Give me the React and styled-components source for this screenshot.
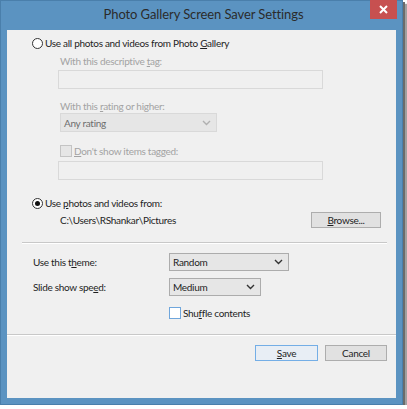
import React from 'react';
import styled, { createGlobalStyle } from 'styled-components';

const GlobalStyle = createGlobalStyle`
  html, body {
    margin: 0;
    padding: 0;
    background: #ffffff;
  }
  body {
    font-family: "Segoe UI", Lato, "Noto Sans", sans-serif;
    font-size: 10px;
    letter-spacing: -0.3px;
    color: #1e1e1e;
  }
`;

// Window frame with the Windows 8 blue chrome
const Window = styled.div`
  width: 403px;
  height: 405px;
  box-sizing: border-box;
  background: #5b93c1;
  border: 1px solid #4a7fab;
  box-shadow: 2px 2px 0 #6b6b6b, 4px 4px 1px #a0a0a0;
  display: flex;
  flex-direction: column;
`;

const TitleBar = styled.div`
  height: 29px;
  display: flex;
  align-items: flex-start;
  position: relative;
`;

const Title = styled.div`
  flex: 1;
  text-align: center;
  font-size: 13px;
  letter-spacing: -0.1px;
  line-height: 26px;
  color: #2b2b2b;
  padding-left: 4px;
`;

const CloseButton = styled.div`
  position: absolute;
  top: -1px;
  right: 5px;
  width: 27px;
  height: 19px;
  background: #c75050;
  display: flex;
  align-items: center;
  justify-content: center;
`;

const Panel = styled.div`
  flex: 1;
  margin: 0 6px 6px 6px;
  background: #f0f0f0;
  display: flex;
  flex-direction: column;
  padding-top: 5px;
`;

const RadioRow = styled.label`
  display: flex;
  align-items: center;
  height: 16px;
  padding-left: 25px;
  margin-top: ${p => p.$top || 0}px;
`;

const RadioCircle = styled.span`
  width: 11px;
  height: 11px;
  box-sizing: border-box;
  border-radius: 50%;
  border: 1px solid #333333;
  background: #ffffff;
  margin-right: 2px;
  display: flex;
  align-items: center;
  justify-content: center;

  &::after {
    content: '';
    width: 5px;
    height: 5px;
    border-radius: 50%;
    background: ${p => (p.$checked ? '#111111' : 'transparent')};
  }
`;

const Indented = styled.div`
  display: flex;
  flex-direction: column;
  padding-left: 51px;
`;

const FieldLabel = styled.div`
  color: ${p => (p.$disabled ? '#a3a3a3' : '#1e1e1e')};
  line-height: 13px;
  padding-left: 2px;
  margin-top: ${p => p.$top || 0}px;
  margin-bottom: ${p => p.$bottom || 0}px;
`;

const TextBox = styled.div`
  width: 265px;
  height: 19px;
  box-sizing: border-box;
  border: 1px solid #d9d9d9;
  background: #f0f0f0;
  margin-top: ${p => p.$top || 0}px;
`;

const Select = styled.div`
  width: ${p => p.$width}px;
  height: ${p => p.$height || 18}px;
  box-sizing: border-box;
  border: 1px solid ${p => (p.$disabled ? '#d9d9d9' : '#acacac')};
  background: #e6e6e6;
  color: ${p => (p.$disabled ? '#6d6d6d' : '#1e1e1e')};
  display: flex;
  align-items: center;
  justify-content: space-between;
  padding: 0 5px 0 3px;
  margin-left: ${p => p.$left || 0}px;
`;

const CheckRow = styled.label`
  display: flex;
  align-items: center;
  height: 13px;
  color: ${p => (p.$disabled ? '#a3a3a3' : '#1e1e1e')};
  padding-left: ${p => p.$left || 0}px;
  margin-top: ${p => p.$top || 0}px;
`;

const CheckBox = styled.span`
  width: 12px;
  height: 12px;
  box-sizing: border-box;
  border: 1px solid ${p => (p.$focus ? '#6fa6dc' : '#c4c4c4')};
  background: ${p => (p.$focus ? '#ffffff' : '#e6e6e6')};
  margin-right: 2px;
`;

const PathRow = styled.div`
  display: flex;
  align-items: center;
  justify-content: space-between;
  padding-left: 53px;
  padding-right: 15px;
  margin-top: 1px;
`;

const Button = styled.div`
  width: ${p => p.$width}px;
  height: 16px;
  box-sizing: border-box;
  border: 1px solid ${p => (p.$primary ? '#74aee6' : '#adadad')};
  background: ${p => (p.$primary ? '#e8eef5' : '#e1e1e1')};
  display: flex;
  align-items: center;
  justify-content: center;
  line-height: 14px;
`;

const Separator = styled.div`
  height: 1px;
  background: #c8c8c8;
  border-bottom: 1px solid #ffffff;
  margin: ${p => p.$margin};
`;

const SettingsGrid = styled.div`
  display: grid;
  grid-template-columns: 136px auto;
  row-gap: 7px;
  align-items: center;
  padding-left: 26px;
`;

const ButtonBar = styled.div`
  display: flex;
  justify-content: flex-end;
  gap: 7px;
  padding-right: 9px;
  margin-top: 9px;
`;

const Key = styled.span`
  text-decoration: underline;
  text-underline-offset: 1px;
`;

const Chevron = ({ color }) => (
  <svg width="9" height="6" viewBox="0 0 9 6">
    <polyline points="1,1 4.5,4.5 8,1" fill="none" stroke={color} strokeWidth="1.4" />
  </svg>
);

const CloseIcon = () => (
  <svg width="9" height="9" viewBox="0 0 9 9">
    <path d="M1 1 L8 8 M8 1 L1 8" stroke="#ffffff" strokeWidth="2" />
  </svg>
);

function App() {
  return (
    <>
      <GlobalStyle />
      <Window>
        <TitleBar>
          <Title>Photo Gallery Screen Saver Settings</Title>
          <CloseButton>
            <CloseIcon />
          </CloseButton>
        </TitleBar>
        <Panel>
          <RadioRow>
            <RadioCircle />
            <span>
              Use all photos and videos from Photo <Key>G</Key>allery
            </span>
          </RadioRow>

          <Indented>
            <FieldLabel $disabled $top={4} $bottom={2}>
              With this descriptive <Key>t</Key>ag:
            </FieldLabel>
            <TextBox />
            <FieldLabel $disabled $top={11}>
              With this <Key>r</Key>ating or higher:
            </FieldLabel>
            <Select $width={157} $height={19} $disabled $left={2}>
              <span>Any rating</span>
              <Chevron color="#b0b0b0" />
            </Select>
            <CheckRow $disabled $top={12} $left={2}>
              <CheckBox />
              <span>
                <Key>D</Key>on't show items tagged:
              </span>
            </CheckRow>
            <TextBox $top={4} />
          </Indented>

          <RadioRow $top={15}>
            <RadioCircle $checked />
            <span>
              Use <Key>p</Key>hotos and videos from:
            </span>
          </RadioRow>
          <PathRow>
            <span>C:\Users\RShankar\Pictures</span>
            <Button $width={70}>
              <span>
                <Key>B</Key>rowse...
              </span>
            </Button>
          </PathRow>

          <Separator $margin="14px 9px 9px 15px" />

          <SettingsGrid>
            <span>
              Use this t<Key>h</Key>eme:
            </span>
            <Select $width={120}>
              <span>Random</span>
              <Chevron color="#333333" />
            </Select>
            <span>
              Slide show spe<Key>e</Key>d:
            </span>
            <Select $width={92}>
              <span>Medium</span>
              <Chevron color="#333333" />
            </Select>
            <span />
            <CheckRow $top={3}>
              <CheckBox $focus />
              <span>
                Shu<Key>f</Key>fle contents
              </span>
            </CheckRow>
          </SettingsGrid>

          <Separator $margin="15px 0 0 0" />

          <ButtonBar>
            <Button $width={63} $primary>
              <span>
                <Key>S</Key>ave
              </span>
            </Button>
            <Button $width={62}>Cancel</Button>
          </ButtonBar>
        </Panel>
      </Window>
    </>
  );
}

export default App;
